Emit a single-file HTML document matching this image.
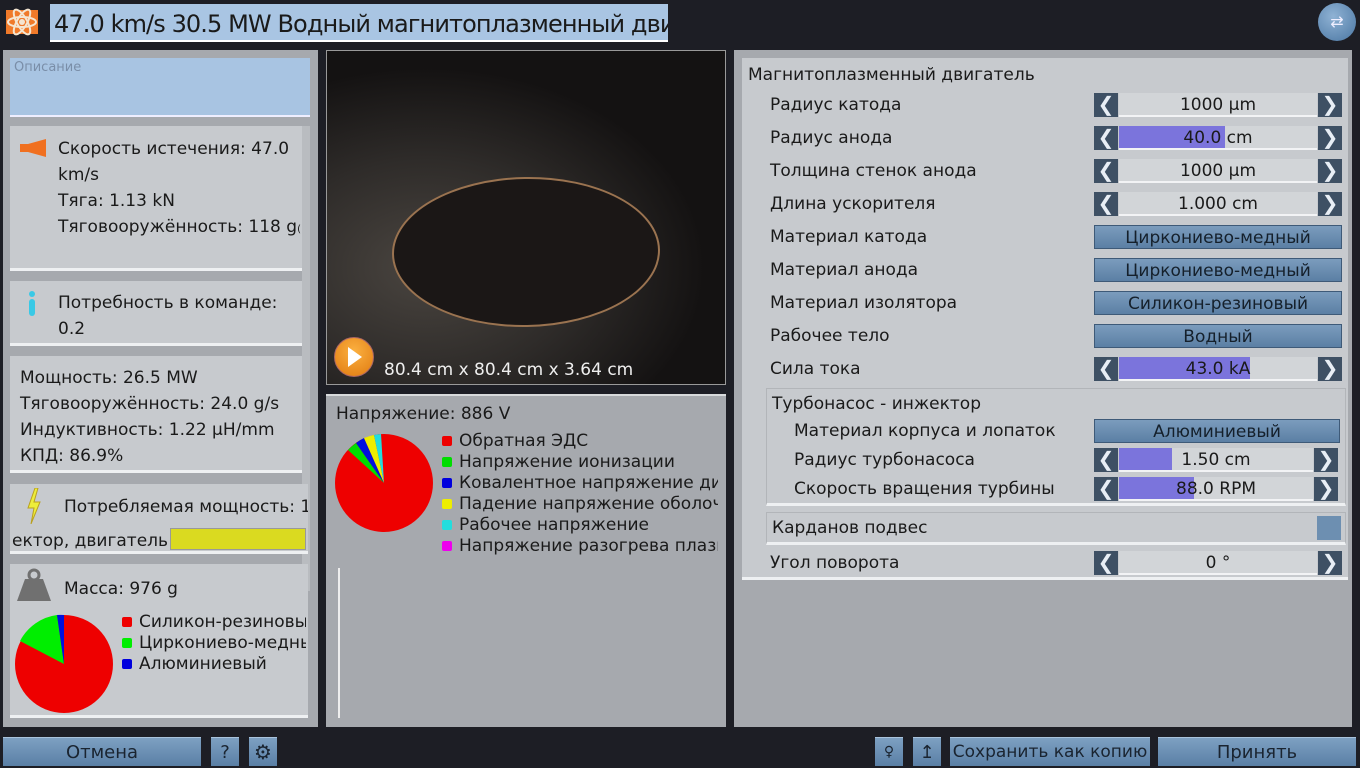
<!DOCTYPE html>
<html><head><meta charset="utf-8"><style>
*{box-sizing:border-box;margin:0;padding:0}
body{width:1360px;height:768px;background:#1d1e25;font-family:"DejaVu Sans","Liberation Sans",sans-serif;color:#1a1a1a;position:relative;overflow:hidden;font-size:17px}
.a{position:absolute}
.panel{background:#a6a9ae}
.box{background:#c7cace;border-bottom:3px solid #eef0f2}
.t{position:absolute;white-space:nowrap;font-size:17px;margin-top:1px}
.arr{position:absolute;width:24px;height:24px;background:#3e5064;color:#e8eef5;font-size:20px;line-height:22px;text-align:center}
.fld{position:absolute;height:24px;background:#d2d5d8;border-bottom:2px solid #f2f3f5;text-align:center;font-size:17px;line-height:25px}
.bar{position:absolute;left:0;top:0;bottom:0;background:#7b74dc}
.btn{position:absolute;height:24px;background:linear-gradient(#7b9cbd,#5b7fa4);border:1px solid #3e5a78;text-align:center;font-size:17px;line-height:24px;color:#15202b}
.bb{position:absolute;top:737px;height:29px;background:linear-gradient(#7da0c2,#5a7fa5);border-top:1px solid #a9c3dc;text-align:center;font-size:18px;line-height:29px;color:#1a2430}
.dot{display:inline-block;width:10px;height:10px;border-radius:2px;margin-right:7px;vertical-align:0}
</style></head><body>
<!-- top -->
<div class="a" style="left:4px;top:4px;width:36px;height:36px;background:#1d1e25">
<svg width="36" height="36"><rect x="2" y="6" width="32" height="24" fill="#f07a2a"/><g fill="none" stroke="#f4e6d2" stroke-width="2"><ellipse cx="18" cy="18" rx="14" ry="5"/><ellipse cx="18" cy="18" rx="14" ry="5" transform="rotate(60 18 18)"/><ellipse cx="18" cy="18" rx="14" ry="5" transform="rotate(-60 18 18)"/></g><circle cx="18" cy="18" r="3" fill="#f4e6d2"/></svg></div>
<div class="a" style="left:50px;top:4px;width:618px;height:38px;background:#a9c5e3;border-bottom:2px solid #fff;font-size:24px;line-height:40px;padding-left:4px;white-space:nowrap;overflow:hidden;letter-spacing:-0.9px">47.0 km/s 30.5 MW Водный магнитоплазменный дви</div>
<div class="a" style="left:1318px;top:3px;width:38px;height:38px;border-radius:50%;background:radial-gradient(circle at 40% 35%,#8fb2d4,#4a76a2);color:#eef;font-size:16px;line-height:38px;text-align:center">⇄</div>

<!-- left panel -->
<div class="a panel" style="left:3px;top:50px;width:315px;height:677px"></div>
<div class="a" style="left:10px;top:58px;width:300px;height:59px;background:#a8c4e2;border-bottom:2px solid #eef"></div>
<div class="t" style="left:14px;top:59px;font-size:13px;color:#7a8ea8">Описание</div>
<div class="a" style="left:302px;top:126px;width:8px;height:465px;background:#b9bcc0"></div>
<div class="a box" style="left:10px;top:126px;width:292px;height:145px"></div>
<svg class="a" style="left:20px;top:139px" width="26" height="18"><path d="M0 5h8l18-5v18l-18-5H0z" fill="#f07020"/></svg>
<div class="t" style="left:58px;top:135px;line-height:26px">Скорость истечения: 47.0<br>km/s<br>Тяга: 1.13 kN<br>Тяговооружённость: 118 g<span style="font-size:10px">(</span></div>
<div class="a box" style="left:10px;top:281px;width:292px;height:65px"></div>
<svg class="a" style="left:26px;top:290px" width="12" height="28"><circle cx="6" cy="4" r="3" fill="#39c9e6"/><rect x="3" y="9" width="6" height="17" rx="3" fill="#39c9e6"/></svg>
<div class="t" style="left:58px;top:289px;line-height:26px">Потребность в команде:<br>0.2</div>
<div class="a box" style="left:10px;top:356px;width:292px;height:117px"></div>
<div class="t" style="left:20px;top:364px;line-height:26px">Мощность: 26.5 MW<br>Тяговооружённость: 24.0 g/s<br>Индуктивность: 1.22 μH/mm<br>КПД: 86.9%</div>
<div class="a box" style="left:10px;top:484px;width:298px;height:70px;overflow:hidden">
<div class="t" style="left:54px;top:12px">Потребляемая мощность: 1</div>
<div class="t" style="left:2px;top:46px">ектор, двигатель</div>
<div class="a" style="left:160px;top:44px;width:136px;height:22px;background:#dada20;border:1px solid #999"></div></div>
<svg class="a" style="left:26px;top:488px" width="16" height="36"><path d="M9 0L2 20h6l-3 16 9-22H8l4-14z" fill="#eded3a" stroke="#b9a020" stroke-width="1"/></svg>
<div class="a box" style="left:10px;top:564px;width:298px;height:154px"></div>
<svg class="a" style="left:17px;top:567px" width="34" height="36"><circle cx="17" cy="8" r="5" fill="none" stroke="#707070" stroke-width="3"/><path d="M8 12h18l8 22H0z" fill="#707070"/></svg>
<div class="t" style="left:64px;top:578px">Масса: 976 g</div>
<svg class="a" style="left:14px;top:614px" width="100" height="100"><circle cx="50" cy="50" r="49" fill="#ee0000"/><path d="M50 50L6 27A49 49 0 0 1 43 1z" fill="#00ee00"/><path d="M50 50L43 1A49 49 0 0 1 50 1z" fill="#0010dd"/></svg>
<div class="t" style="left:122px;top:611px;line-height:21px;width:184px;overflow:hidden"><span class="dot" style="background:#e00"></span>Силикон-резиновый<br><span class="dot" style="background:#0e0"></span>Циркониево-медный<br><span class="dot" style="background:#00d"></span>Алюминиевый</div>

<!-- viewer -->
<div class="a" style="left:326px;top:50px;width:400px;height:335px;border:1px solid #999;background:radial-gradient(ellipse 70% 60% at 25% 65%,#4a4540,#2e2b29 55%,#141212)"></div>
<div class="a" style="left:392px;top:177px;width:268px;height:150px;border-radius:50%;background:#1b1716;border:2px solid #9a7350;transform:rotate(-1deg)"></div>
<div class="a" style="left:334px;top:337px;width:40px;height:40px;border-radius:50%;background:radial-gradient(circle at 50% 35%,#fbb040,#e07a10);border:1px solid #a66"></div>
<svg class="a" style="left:346px;top:346px" width="18" height="22"><path d="M2 1L16 11L2 21z" fill="#fff"/></svg>
<div class="t" style="left:384px;top:359px;color:#eee">80.4 cm x 80.4 cm x 3.64 cm</div>

<!-- voltage -->
<div class="a panel" style="left:326px;top:394px;width:400px;height:333px;border-top:2px solid #d8dadc"></div>
<div class="t" style="left:336px;top:403px">Напряжение: 886 V</div>
<svg class="a" style="left:334px;top:433px" width="100" height="100"><circle cx="50" cy="50" r="49" fill="#ee0000"/><path d="M50 50L14 17A49 49 0 0 1 22 10z" fill="#00dd00"/><path d="M50 50L22 10A49 49 0 0 1 30 5z" fill="#0010dd"/><path d="M50 50L30 5A49 49 0 0 1 40 2z" fill="#eeee00"/><path d="M50 50L40 2A49 49 0 0 1 47 1z" fill="#22dddd"/></svg>
<div class="t" style="left:442px;top:430px;line-height:21px;width:276px;overflow:hidden"><span class="dot" style="background:#e00"></span>Обратная ЭДС<br><span class="dot" style="background:#0d0"></span>Напряжение ионизации<br><span class="dot" style="background:#00d"></span>Ковалентное напряжение ди<br><span class="dot" style="background:#ee0"></span>Падение напряжение оболочки<br><span class="dot" style="background:#2dd"></span>Рабочее напряжение<br><span class="dot" style="background:#e0e"></span>Напряжение разогрева плазмы</div>
<div class="a" style="left:338px;top:568px;width:2px;height:150px;background:#eee"></div>

<!-- right panel -->
<div class="a panel" style="left:734px;top:50px;width:618px;height:677px"></div>
<div class="a" style="left:742px;top:58px;width:606px;height:522px;background:#c7cace;border-bottom:3px solid #eef0f2"></div>
<div class="t" style="left:748px;top:64px">Магнитоплазменный двигатель</div>
<div class="t" style="left:770px;top:94px">Радиус катода</div>
<div class="t" style="left:770px;top:127px">Радиус анода</div>
<div class="t" style="left:770px;top:160px">Толщина стенок анода</div>
<div class="t" style="left:770px;top:193px">Длина ускорителя</div>
<div class="t" style="left:770px;top:226px">Материал катода</div>
<div class="t" style="left:770px;top:259px">Материал анода</div>
<div class="t" style="left:770px;top:292px">Материал изолятора</div>
<div class="t" style="left:770px;top:325px">Рабочее тело</div>
<div class="t" style="left:770px;top:358px">Сила тока</div>

<div class="arr" style="left:1094px;top:93px">❮</div><div class="fld" style="left:1119px;top:93px;width:198px">1000 μm</div><div class="arr" style="left:1318px;top:93px">❯</div>
<div class="arr" style="left:1094px;top:126px">❮</div><div class="fld" style="left:1119px;top:126px;width:198px"><div class="bar" style="width:106px"></div><span style="position:relative">40.0 cm</span></div><div class="arr" style="left:1318px;top:126px">❯</div>
<div class="arr" style="left:1094px;top:159px">❮</div><div class="fld" style="left:1119px;top:159px;width:198px">1000 μm</div><div class="arr" style="left:1318px;top:159px">❯</div>
<div class="arr" style="left:1094px;top:192px">❮</div><div class="fld" style="left:1119px;top:192px;width:198px">1.000 cm</div><div class="arr" style="left:1318px;top:192px">❯</div>
<div class="btn" style="left:1094px;top:225px;width:248px">Циркониево-медный</div>
<div class="btn" style="left:1094px;top:258px;width:248px">Циркониево-медный</div>
<div class="btn" style="left:1094px;top:291px;width:248px">Силикон-резиновый</div>
<div class="btn" style="left:1094px;top:324px;width:248px">Водный</div>
<div class="arr" style="left:1094px;top:357px">❮</div><div class="fld" style="left:1119px;top:357px;width:198px"><div class="bar" style="width:131px"></div><span style="position:relative">43.0 kA</span></div><div class="arr" style="left:1318px;top:357px">❯</div>

<div class="a" style="left:766px;top:388px;width:580px;height:118px;border:1px solid #b2b5b9;border-bottom:3px solid #eef0f2"></div>
<div class="t" style="left:772px;top:393px">Турбонасос - инжектор</div>
<div class="t" style="left:794px;top:420px">Материал корпуса и лопаток</div>
<div class="t" style="left:794px;top:449px">Радиус турбонасоса</div>
<div class="t" style="left:794px;top:478px">Скорость вращения турбины</div>
<div class="btn" style="left:1094px;top:419px;width:246px">Алюминиевый</div>
<div class="arr" style="left:1094px;top:448px">❮</div><div class="fld" style="left:1119px;top:448px;width:194px"><div class="bar" style="width:53px"></div><span style="position:relative">1.50 cm</span></div><div class="arr" style="left:1314px;top:448px">❯</div>
<div class="arr" style="left:1094px;top:477px">❮</div><div class="fld" style="left:1119px;top:477px;width:194px"><div class="bar" style="width:75px"></div><span style="position:relative">88.0 RPM</span></div><div class="arr" style="left:1314px;top:477px">❯</div>

<div class="a" style="left:766px;top:512px;width:580px;height:33px;border:1px solid #b2b5b9;border-bottom:3px solid #eef0f2"></div>
<div class="t" style="left:772px;top:517px">Карданов подвес</div>
<div class="a" style="left:1317px;top:516px;width:24px;height:24px;background:#6d8fb1"></div>
<div class="t" style="left:770px;top:552px">Угол поворота</div>
<div class="arr" style="left:1094px;top:551px">❮</div><div class="fld" style="left:1119px;top:551px;width:198px">0 °</div><div class="arr" style="left:1318px;top:551px">❯</div>

<!-- bottom -->
<div class="bb" style="left:3px;width:198px">Отмена</div>
<div class="bb" style="left:211px;width:28px">?</div>
<div class="bb" style="left:249px;width:28px;font-size:20px">⚙</div>
<div class="bb" style="left:875px;width:28px;font-size:14px">♀</div>
<div class="bb" style="left:913px;width:28px">↥</div>
<div class="bb" style="left:950px;width:200px;font-size:17px">Сохранить как копию</div>
<div class="bb" style="left:1158px;width:198px">Принять</div>
</body></html>
